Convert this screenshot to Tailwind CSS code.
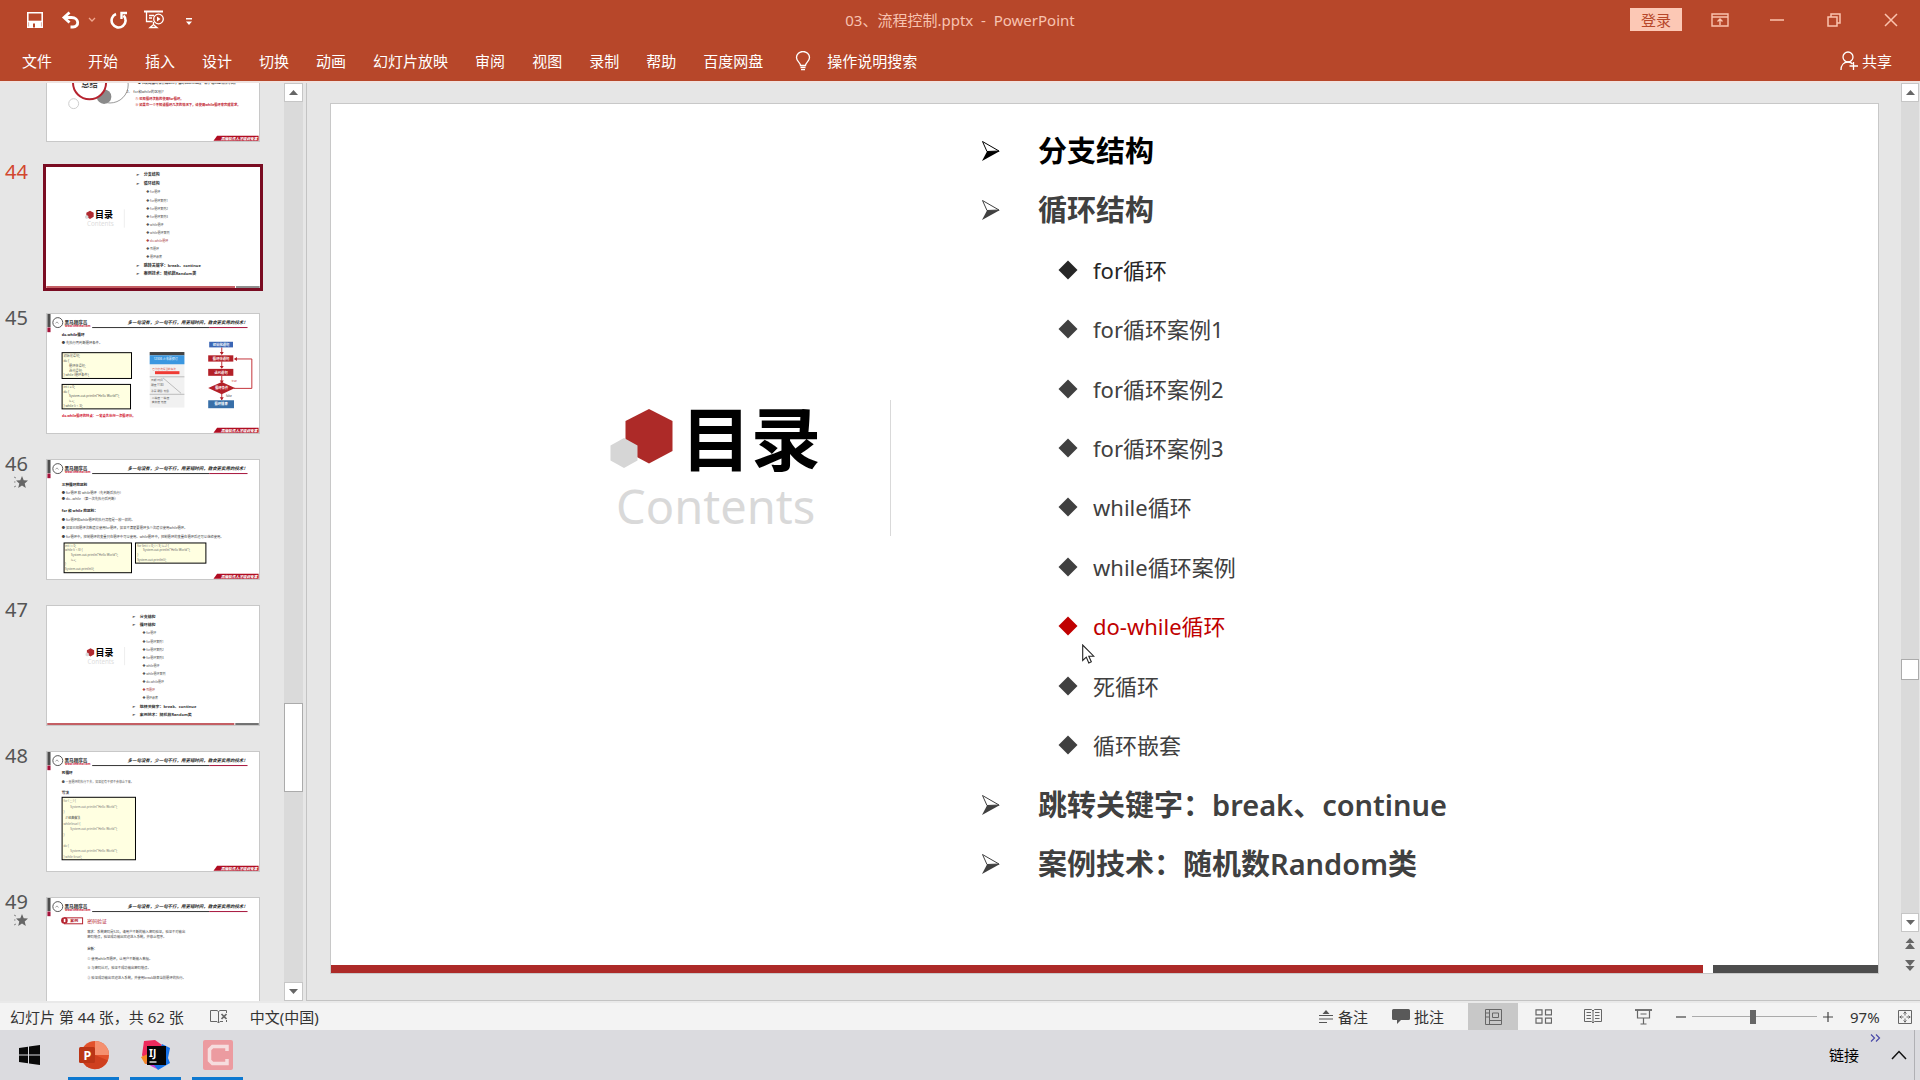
<!DOCTYPE html>
<html lang="zh-CN">
<head>
<meta charset="utf-8">
<title>03、流程控制.pptx - PowerPoint</title>
<script src="https://cdn.jsdelivr.net/npm/@tailwindcss/browser@4"></script>
</head>
<body class="flex h-screen flex-col overflow-hidden bg-[#e6e6e6] font-['Noto_Sans','Noto_Sans_CJK_SC',sans-serif] text-[15px] leading-5 text-[#333]">

<!-- Shared parts of the slide thumbnails -->
<svg width="0" height="0" class="absolute" aria-hidden="true">
  <defs>
    <symbol id="brand" viewBox="0 0 640 360">
      <rect width="10" height="40" fill="#4d4d4d"/><rect y="41" width="10" height="14" fill="#a5123a"/>
      <circle cx="32" cy="26" r="15" fill="none" stroke="#555" stroke-width="3"/><path d="M25 28l5-4 4 5" stroke="#777" stroke-width="2" fill="none"/>
      <text x="52" y="29" font-size="14" font-weight="900" fill="#444">黑马程序员</text>
      <text x="54" y="38" font-size="8.5" font-weight="700" fill="#d02238">www.itheima.com</text>
      <text x="243" y="30" font-size="13.5" font-weight="700" font-style="italic" fill="#222">多一句没有，少一句不行，用更短时间，教会更实用的技术！</text>
      <path d="M136 41H490" stroke="#333" stroke-width="3"/><path d="M490 41H606" stroke="#a5123a" stroke-width="3"/>
    </symbol>
    <symbol id="ribbon" viewBox="0 0 640 360">
      <path d="M514 344h126v15H503z" fill="#b00d22"/>
      <text x="526" y="356" font-size="11" font-weight="900" font-style="italic" fill="#fff">高级软件人才培训专家</text>
    </symbol>
    <symbol id="toc-title" viewBox="0 0 640 360">
      <path d="M131 128l11 6v12l-11 7-11-7v-12z" fill="#b02a30"/><path d="M121 141l5 3v6l-5 3-5-3v-6z" fill="#d9d9d9"/>
      <text x="146" y="150" font-size="27" font-weight="700" fill="#000">目录</text>
      <text x="122" y="174" font-size="19" fill="#ddd">Contents</text>
      <path d="M234 124v55" stroke="#ccc" stroke-width="1"/>
    </symbol>
    <symbol id="toc-list" viewBox="0 0 240 360">
      <g font-size="12" font-weight="700" fill="#333">
        <text x="14" y="25">➢</text><text x="38" y="25">分支结构</text>
        <text x="14" y="52">➢</text><text x="38" y="52">循环结构</text>
        <text x="14" y="298">➢</text><text x="38" y="298">跳转关键字：break、continue</text>
        <text x="14" y="322">➢</text><text x="38" y="322">案例技术：随机数Random类</text>
      </g>
      <g font-size="9" fill="#555">
        <text x="46" y="76">◆  for循环</text><text x="46" y="101">◆  for循环案例1</text><text x="46" y="125">◆  for循环案例2</text>
        <text x="46" y="149">◆  for循环案例3</text><text x="46" y="175">◆  while循环</text><text x="46" y="199">◆  while循环案例</text>
      </g>
    </symbol>
  </defs>
</svg>

<header class="flex h-[81px] shrink-0 flex-col bg-[#b7472a] text-white">
  <div class="grid h-[39px] grid-cols-[1fr_auto_1fr] items-center">
    <div class="flex items-center pl-[26px]">
      <button aria-label="保存"><svg width="18" height="18" viewBox="0 0 18 18" fill="none" stroke="#fff" stroke-width="1.6"><path d="M1.8 1.8h14.4v14.4H1.8zM4 16v-5h10v5"/><path d="M2 10.5h14"/><path d="M4 11h10v5H4z" fill="#fff"/><path d="M8 12.5v4" stroke="#b7472a" stroke-width="2"/></svg></button>
      <button aria-label="撤消" class="ml-[17px]"><svg width="19" height="18" viewBox="0 0 19 18" fill="none" stroke="#fff" stroke-width="2.8"><path d="M8.5 1.500L3 6.500l5.500 5M3 6.500h7.500c8 0 8 9.500 1.500 9.500H9.500"/></svg></button>
      <button aria-label="撤消列表" class="ml-2"><svg width="8" height="6" viewBox="0 0 8 6" fill="none" stroke="#f0a890" stroke-width="1.300"><path d="M1 1l3 3 3-3"/></svg></button>
      <button aria-label="重复" class="ml-[14px]"><svg width="18" height="18" viewBox="0 0 18 18" fill="none" stroke="#fff" stroke-width="2.600"><path d="M6 3A7 7 0 1 0 13.500 4.500"/><path d="M17 2h-5.500v6" stroke-width="2.400"/></svg></button>
      <button aria-label="从头开始放映" class="ml-4"><svg width="21" height="19" viewBox="0 0 21 19" fill="none" stroke="#fff" stroke-width="1.300"><path d="M0 1.500h19" stroke-width="2"/><path d="M2.500 2v9.500h6M5 5.500h5M5 8h3M9.500 12v3M6 17.500l3.500-3 3.500 3z"/><circle cx="14.500" cy="9" r="4.800"/><path d="M13 6.500v5l3.500-2.500z" fill="#fff" stroke="none"/></svg></button>
      <button aria-label="自定义快速访问工具栏" class="ml-5 pt-1"><svg width="8" height="8" viewBox="0 0 8 8"><path d="M1 0h6v1.500H1zM1 3.500h6L4 7z" fill="#fff"/></svg></button>
    </div>
    <h1 class="whitespace-pre text-[#f7c3b1]">03、流程控制.pptx  -  PowerPoint</h1>
    <div class="flex items-center justify-end pr-px">
      <button class="mr-[9px] h-[23px] w-[52px] bg-[#fcc8b5] text-[#b7472a]">登录</button>
      <button aria-label="功能区显示选项" class="flex w-[57px] justify-center"><svg width="18" height="14" viewBox="0 0 18 14" fill="none" stroke="#fbc3ae" stroke-width="1.400"><path d="M1 1h16v12H1zM1 4h16M9 12V6.500M6.500 8.500L9 6l2.500 2.500"/></svg></button>
      <button aria-label="最小化" class="flex w-[57px] justify-center"><svg width="14" height="14" viewBox="0 0 14 14"><path d="M0 7h14" stroke="#fbc3ae" stroke-width="1.500"/></svg></button>
      <button aria-label="还原" class="flex w-[57px] justify-center"><svg width="14" height="14" viewBox="0 0 14 14" fill="none" stroke="#fbc3ae" stroke-width="1.500"><path d="M1 4h9v9H1zM4 4V1h9v9h-3"/></svg></button>
      <button aria-label="关闭" class="flex w-[57px] justify-center"><svg width="14" height="14" viewBox="0 0 14 14"><path d="M1 1l12 12M13 1L1 13" stroke="#fbc3ae" stroke-width="1.500"/></svg></button>
    </div>
  </div>
  <nav class="flex flex-1 items-center gap-[27px] pt-px pr-7 pl-[22px]">
    <button class="mr-[9px]">文件</button><button>开始</button><button>插入</button><button>设计</button><button>切换</button><button>动画</button><button>幻灯片放映</button><button>审阅</button><button>视图</button><button>录制</button><button>帮助</button><button>百度网盘</button>
    <button class="ml-[5px] flex items-center gap-4"><svg width="16" height="20" viewBox="0 0 16 20" fill="none" stroke="#fff" stroke-width="1.300"><path d="M5.500 14.500c0-3-4-4-4-8a6.500 6 0 0 1 13 0c0 4-4 5-4 8zM5.500 16.500h5M6 18.700h4"/></svg>操作说明搜索</button>
    <button class="ml-auto flex items-center gap-1"><svg width="18" height="20" viewBox="0 0 18 20" fill="none" stroke="#fff" stroke-width="1.300"><circle cx="8" cy="6" r="5"/><path d="M1 19c0-5 3-8 7-8 2 0 3.500.7 4.500 2M13.500 11v8M9.500 15H18"/></svg>共享</button>
  </nav>
</header>

<main class="flex min-h-0 flex-1 overflow-hidden border-t-2 border-[#efe3e0]">
  <aside class="flex w-[307px] shrink-0 border-r border-[#c3c3c3]">
    <ol class="-mt-[62px] flex-1 overflow-hidden text-[20px] leading-[10px] text-[#555]">
      <li class="flex h-[146px]">
        <span class="w-[46px]"></span>
        <button aria-label="幻灯片 43" class="h-[121px] w-[214px] border border-[#c8c8c8] bg-white">
          <svg width="212" height="119" viewBox="0 0 640 360" class="block">
            <circle cx="190" cy="190" r="55" fill="none" stroke="#666" stroke-width="2"/><circle cx="172" cy="226" r="22" fill="#8a8a8a"/>
            <circle cx="128" cy="184" r="50" fill="#fff" stroke="#b5232f" stroke-width="6"/><circle cx="80" cy="247" r="15" fill="none" stroke="#ccc" stroke-width="3"/>
            <text x="103" y="196" font-size="25" font-weight="700" fill="#444">总结</text>
            <text x="274" y="187" font-size="10" font-weight="700" fill="#222">● 先判断循环条件再执行，循环的执行流程一样，格式上有所不同。</text>
            <text x="240" y="214" font-size="11" fill="#444">2、 for和while的区别？</text>
            <text x="266" y="236" font-size="10" font-weight="700" fill="#c0202c">① 已知循环次数的使用for循环。</text>
            <text x="266" y="254" font-size="10" font-weight="700" fill="#c0202c">② 如果在一个不知道循环几次的情况下，请使用while循环来完成需求。</text>
            <use href="#ribbon"/>
          </svg>
        </button>
      </li>
      <li class="flex h-[146px]">
        <span class="w-[46px] pl-[5px] text-[#d2472f]">44</span>
        <button aria-label="幻灯片 44" aria-current="true" class="h-[121px] w-[214px] bg-white outline-3 outline-[#7a0c22]">
          <svg width="214" height="120" viewBox="0 0 640 360" class="block">
            <use href="#toc-title"/><use href="#toc-list" x="254" width="240" height="360"/>
            <g font-size="9" fill="#555"><text x="300" y="223" fill="#a44">◆  do-while循环</text><text x="300" y="247">◆  死循环</text><text x="300" y="271">◆  循环嵌套</text></g>
            <path d="M0 357H566" stroke="#b02a30" stroke-width="4"/><path d="M569 357H640" stroke="#555" stroke-width="4"/>
          </svg>
        </button>
      </li>
      <li class="flex h-[146px]">
        <span class="w-[46px] pl-[5px]">45</span>
        <button aria-label="幻灯片 45" class="h-[121px] w-[214px] border border-[#c8c8c8] bg-white">
          <svg width="212" height="119" viewBox="0 0 640 360" class="block">
            <use href="#brand"/>
            <text x="44" y="68" font-size="11" font-weight="700" fill="#222">do-while循环</text>
            <text x="44" y="92" font-size="10" fill="#444">●  先执行再判断循环条件。</text>
            <rect x="45" y="117" width="210" height="78" fill="#ffffe1" stroke="#000" stroke-width="3"/>
            <g font-size="9.500" fill="#555"><text x="49" y="131">初始化语句;</text><text x="49" y="145">do {</text><text x="66" y="159">循环体语句;</text><text x="66" y="174">迭代语句;</text><text x="49" y="189">} while (循环条件);</text></g>
            <rect x="45" y="213" width="207" height="74" fill="#ffffe1" stroke="#000" stroke-width="3"/>
            <g font-size="9.500" fill="#555"><text x="49" y="225">int i = 0;</text><text x="49" y="238">do {</text><text x="66" y="252">System.out.println("Hello World!");</text><text x="66" y="267">i++;</text><text x="49" y="282">} while (i &lt; 3);</text></g>
            <text x="45" y="311" font-size="10" font-weight="700" fill="#d0112b">do-while循环的特点：一定会先执行一次循环体。</text>
            <rect x="310" y="115" width="105" height="168" fill="#f1f1f1"/><rect x="310" y="115" width="105" height="10" fill="#444"/><rect x="310" y="125" width="105" height="27" fill="#3b97e0"/>
            <text x="322" y="140" font-size="9" fill="#fff">12306 火车票预订</text><text x="318" y="168" font-size="8" fill="#d95b50">已为您选择当前车次</text><rect x="326" y="173" width="74" height="9" fill="#ef3b34"/>
            <g font-size="8.500" fill="#666"><text x="314" y="203">日期  时间</text><text x="314" y="218">硬座 ¥180</text><text x="314" y="236">余票  硬卧  软卧</text><text x="316" y="258">二等座     一等座</text><text x="316" y="270">商务座     无座</text></g>
            <path d="M310 190h105M310 243h105M350 193l55 47" stroke="#bbb" stroke-width="3"/>
            <g stroke="#c3343a" stroke-width="3" fill="none"><path d="M528 101v20M528 143v20M528 187v20M528 242v18M564 225h55V136H567"/></g>
            <path d="M522 115h12l-6 9zM522 157h12l-6 9zM522 201h12l-6 9zM522 252h12l-6 9zM574 130v12l-9-6z" fill="#b32028"/>
            <rect x="490" y="84" width="72" height="17" fill="#3b66b5"/><rect x="487" y="125" width="76" height="19" fill="#b32028"/><rect x="487" y="166" width="76" height="21" fill="#b32028"/><path d="M528 206l40 18-40 19-41-19z" fill="#b32028"/><rect x="487" y="261" width="78" height="24" fill="#386fa8"/>
            <g font-size="10" font-weight="700" fill="#fff" text-anchor="middle"><text x="526" y="96">初始化语句</text><text x="526" y="138">循环体语句</text><text x="526" y="180">迭代语句</text><text x="528" y="228">循环条件</text><text x="526" y="276">循环结束</text></g>
            <text x="558" y="207" font-size="8" fill="#c33">true</text><text x="541" y="252" font-size="8" fill="#333">false</text>
            <use href="#ribbon"/>
          </svg>
        </button>
      </li>
      <li class="flex h-[146px]">
        <div class="flex w-[46px] flex-col gap-[7px] pl-[5px]"><span>46</span><svg width="14" height="13" viewBox="0 0 14 13" class="ml-[9px]"><path d="M8 0l1.700 4.300 4.300.3-3.300 2.800 1.100 4.600L8 9.500 4.200 12l1.100-4.600L2 4.600l4.300-.3z" fill="#666"/><path d="M0 1l2 1M0 6h1.500M0 11l2-1" stroke="#888"/></svg></div>
        <button aria-label="幻灯片 46" class="h-[121px] w-[214px] border border-[#c8c8c8] bg-white">
          <svg width="212" height="119" viewBox="0 0 640 360" class="block">
            <use href="#brand"/>
            <g font-size="11" font-weight="700" fill="#222"><text x="44" y="79">三种循环的区别</text><text x="44" y="157">for 和 while 的区别：</text></g>
            <g font-size="10" fill="#444"><text x="44" y="103">●  for循环 和 while循环（先判断后执行）</text><text x="44" y="122">●  do...while （第一次先执行后判断）</text><text x="44" y="185">●  for循环和while循环的执行流程是一模一样的。</text><text x="44" y="209">●  如果已知循环次数建议使用for循环，如果不清楚要循环多少次建议使用while循环。</text></g>
            <text x="44" y="236" font-size="10" fill="#444">●  for循环中，控制循环的变量只在循环中可以使用。while循环中，控制循环的变量在循环后还可以继续使用。</text>
            <rect x="51" y="251" width="204" height="90" fill="#ffffe1" stroke="#000" stroke-width="3"/>
            <rect x="267" y="251" width="213" height="61" fill="#ffffe1" stroke="#000" stroke-width="3"/>
            <g font-size="9" fill="#666"><text x="54" y="263">int i = 0;</text><text x="54" y="276">while (i &lt; 3) {</text><text x="72" y="290">System.out.println("Hello World");</text><text x="72" y="305">i++;</text><text x="54" y="319">}</text><text x="54" y="334">System.out.println(i);</text><text x="272" y="263">for (int i = 0; i &lt; 3; i++) {</text><text x="290" y="276">System.out.println("Hello World");</text><text x="272" y="290">}</text><text x="272" y="305">System.out.println(i);</text></g>
            <use href="#ribbon"/>
          </svg>
        </button>
      </li>
      <li class="flex h-[146px]">
        <span class="w-[46px] pl-[5px]">47</span>
        <button aria-label="幻灯片 47" class="h-[121px] w-[214px] border border-[#c8c8c8] bg-white">
          <svg width="212" height="119" viewBox="0 0 640 360" class="block">
            <use href="#toc-title"/><use href="#toc-list" x="242" y="10" width="240" height="360"/>
            <g font-size="9" fill="#555"><text x="288" y="233">◆  do-while循环</text><text x="288" y="257" fill="#a44">◆  死循环</text><text x="288" y="281">◆  循环嵌套</text></g>
            <path d="M0 357H566" stroke="#b02a30" stroke-width="5"/><path d="M569 357H640" stroke="#555" stroke-width="5"/>
          </svg>
        </button>
      </li>
      <li class="flex h-[146px]">
        <span class="w-[46px] pl-[5px]">48</span>
        <button aria-label="幻灯片 48" class="h-[121px] w-[214px] border border-[#c8c8c8] bg-white">
          <svg width="212" height="119" viewBox="0 0 640 360" class="block">
            <use href="#brand"/>
            <g font-size="11" font-weight="700" fill="#222"><text x="44" y="67">死循环</text><text x="44" y="127">写法</text></g>
            <text x="44" y="95" font-size="9" fill="#555">●   一直循环的执行下去，如果没有干预不会停止下来。</text>
            <rect x="45" y="137" width="222" height="189" fill="#ffffe1" stroke="#000" stroke-width="3"/>
            <g font-size="9" fill="#777"><text x="49" y="151">for ( ; ; ) {</text><text x="70" y="169">System.out.println("Hello World");</text><text x="49" y="184">}</text><text x="55" y="202" fill="#333">// 经典做法</text><text x="49" y="220">while(true) {</text><text x="70" y="235">System.out.println("Hello World");</text><text x="49" y="255">}</text><text x="49" y="286">do {</text><text x="70" y="304">System.out.println("Hello World");</text><text x="49" y="320">} while (true);</text></g>
            <use href="#ribbon"/>
          </svg>
        </button>
      </li>
      <li class="flex h-[146px]">
        <div class="flex w-[46px] flex-col gap-[7px] pl-[5px]"><span>49</span><svg width="14" height="13" viewBox="0 0 14 13" class="ml-[9px]"><path d="M8 0l1.700 4.300 4.300.3-3.300 2.800 1.100 4.600L8 9.500 4.200 12l1.100-4.600L2 4.600l4.300-.3z" fill="#666"/><path d="M0 1l2 1M0 6h1.500M0 11l2-1" stroke="#888"/></svg></div>
        <button aria-label="幻灯片 49" class="h-[121px] w-[214px] border border-[#c8c8c8] bg-white">
          <svg width="212" height="119" viewBox="0 0 640 360" class="block">
            <use href="#brand"/>
            <rect x="52" y="60" width="55" height="18" fill="#fff" stroke="#b5232f" stroke-width="3"/><circle cx="52" cy="68" r="10" fill="#b5232f"/><path d="M50 63h5v10h-5z" fill="#fff"/>
            <text x="70" y="73" font-size="12" font-weight="700" fill="#b5232f">案例</text><text x="121" y="75" font-size="15" fill="#b5232f">密码验证</text>
            <g font-size="10" fill="#444"><text x="121" y="105">需求：系统密码是520，请用户不断的输入密码验证，验证不对输出</text><text x="121" y="122">密码错误，验证成功输出欢迎进入系统，并停止程序。</text><text x="121" y="158" font-weight="700">分析：</text><text x="121" y="189">①  使用while死循环，让用户不断输入数据。</text><text x="121" y="216">②  与密码比对，验证不成功输出密码错误。</text><text x="121" y="246">③  验证成功输出欢迎进入系统，并使用break结束当前循环的执行。</text></g>
            <use href="#ribbon"/>
          </svg>
        </button>
      </li>
    </ol>
    <div class="mr-[3px] flex w-[19px] flex-col bg-[#dadada]">
      <button aria-label="向上滚动" class="flex h-[19px] items-center justify-center border border-[#c6c6c6] bg-white"><svg width="9" height="5" viewBox="0 0 9 5"><path d="M0 5h9L4.500 0z" fill="#666"/></svg></button>
      <div class="flex-[603]"></div>
      <div class="h-[89px] border border-[#ababab] bg-white"></div>
      <div class="flex-[190]"></div>
      <button aria-label="向下滚动" class="flex h-[19px] items-center justify-center border border-[#c6c6c6] bg-white"><svg width="9" height="5" viewBox="0 0 9 5"><path d="M0 0h9L4.500 5z" fill="#666"/></svg></button>
    </div>
  </aside>

  <div class="flex min-w-0 flex-1 border-b border-[#c3c3c3]">
    <section class="mt-5 mr-[22px] mb-[26px] ml-[23px] flex flex-1 flex-col border border-[#c8c8c8] bg-white">
      <div class="flex flex-1">
        <div class="flex w-[560px] shrink-0 flex-col pt-[296px]">
          <div class="flex h-[136px] justify-end border-r border-[#d9d9d9] pr-[68px]">
            <div class="flex w-[212px] flex-col pt-px">
              <div class="flex h-[76px] items-center">
                <svg width="64" height="60" viewBox="0 0 64 60" class="shrink-0"><path d="M39 0l23.500 12v30L39 54.500 15.500 42V12z" fill="#ad2a28"/><path d="M14 29l13.500 7.500v15L14 59 .5 51.500v-15z" fill="#d6d6d6"/></svg>
                <h2 class="ml-[7px] text-[70px] leading-[76px] font-bold whitespace-nowrap text-black">目录</h2>
              </div>
              <p class="pt-px pl-[6px] text-[47px] leading-[56px] text-[#d9d9d9]">Contents</p>
            </div>
          </div>
        </div>
        <ul class="grid flex-1 auto-rows-fr items-center pt-[17px] pb-[71px] pl-[90px] text-[22px] text-[#404040] [&_svg]:shrink-0">
          <li class="flex items-center gap-[37px] text-[29px] font-semibold text-black"><svg width="20" height="22" viewBox="0 0 20 22"><path d="M1.500 1.500L18 11 6 11.500z" fill="#fff" stroke="currentColor"/><path d="M6 11.500L19 11 1 21z" fill="currentColor"/></svg>分支结构</li>
          <li class="flex items-center gap-[37px] text-[29px] font-semibold"><svg width="20" height="22" viewBox="0 0 20 22"><path d="M1.500 1.500L18 11 6 11.500z" fill="#fff" stroke="currentColor"/><path d="M6 11.500L19 11 1 21z" fill="currentColor"/></svg>循环结构</li>
          <li class="flex items-center gap-[15px] pl-[77px] text-[#262626]"><svg width="20" height="20" viewBox="0 0 20 20"><path d="M10 .5l9.500 9.500-9.500 9.500L.5 10z" fill="currentColor"/></svg>for循环</li>
          <li class="flex items-center gap-[15px] pl-[77px]"><svg width="20" height="20" viewBox="0 0 20 20"><path d="M10 .5l9.500 9.500-9.500 9.500L.5 10z" fill="currentColor"/></svg>for循环案例1</li>
          <li class="flex items-center gap-[15px] pl-[77px]"><svg width="20" height="20" viewBox="0 0 20 20"><path d="M10 .5l9.500 9.500-9.500 9.500L.5 10z" fill="currentColor"/></svg>for循环案例2</li>
          <li class="flex items-center gap-[15px] pl-[77px]"><svg width="20" height="20" viewBox="0 0 20 20"><path d="M10 .5l9.500 9.500-9.500 9.500L.5 10z" fill="currentColor"/></svg>for循环案例3</li>
          <li class="flex items-center gap-[15px] pl-[77px]"><svg width="20" height="20" viewBox="0 0 20 20"><path d="M10 .5l9.500 9.500-9.500 9.500L.5 10z" fill="currentColor"/></svg>while循环</li>
          <li class="flex items-center gap-[15px] pl-[77px]"><svg width="20" height="20" viewBox="0 0 20 20"><path d="M10 .5l9.500 9.500-9.500 9.500L.5 10z" fill="currentColor"/></svg>while循环案例</li>
          <li class="relative flex items-center gap-[15px] pl-[77px] text-[#c00000]"><svg width="20" height="20" viewBox="0 0 20 20"><path d="M10 .5l9.500 9.500-9.500 9.500L.5 10z" fill="currentColor"/></svg>do-while循环
            <svg width="13" height="20" viewBox="0 0 13 20" class="absolute top-7 left-[101px]" aria-hidden="true"><path d="M.7 1v15.500l3.600-3.400 2.500 5.800 2.500-1.100-2.500-5.600h5z" fill="#fff" stroke="#222" stroke-width="1.100"/></svg>
          </li>
          <li class="flex items-center gap-[15px] pl-[77px]"><svg width="20" height="20" viewBox="0 0 20 20"><path d="M10 .5l9.500 9.500-9.500 9.500L.5 10z" fill="currentColor"/></svg>死循环</li>
          <li class="flex items-center gap-[15px] pl-[77px]"><svg width="20" height="20" viewBox="0 0 20 20"><path d="M10 .5l9.500 9.500-9.500 9.500L.5 10z" fill="currentColor"/></svg>循环嵌套</li>
          <li class="flex items-center gap-[37px] text-[29px] font-semibold"><svg width="20" height="22" viewBox="0 0 20 22"><path d="M1.500 1.500L18 11 6 11.500z" fill="#fff" stroke="currentColor"/><path d="M6 11.500L19 11 1 21z" fill="currentColor"/></svg>跳转关键字：break、continue</li>
          <li class="flex items-center gap-[37px] text-[29px] font-semibold"><svg width="20" height="22" viewBox="0 0 20 22"><path d="M1.500 1.500L18 11 6 11.500z" fill="#fff" stroke="currentColor"/><path d="M6 11.500L19 11 1 21z" fill="currentColor"/></svg>案例技术：随机数Random类</li>
        </ul>
      </div>
      <div class="flex h-2 gap-[10px]"><div class="flex-1 bg-[#ad2a28]"></div><div class="w-[165px] bg-[#4d4d4d]"></div></div>
    </section>
    <div class="mr-px flex w-[18px] flex-col items-stretch pb-[29px]">
      <button aria-label="上一屏" class="flex h-[19px] shrink-0 items-center justify-center border border-[#c6c6c6] bg-white"><svg width="9" height="5" viewBox="0 0 9 5"><path d="M0 5h9L4.500 0z" fill="#666"/></svg></button>
      <div class="flex-[557] bg-[#dadada]"></div>
      <div class="h-[21px] border border-[#ababab] bg-white"></div>
      <div class="flex-[233] bg-[#dadada]"></div>
      <button aria-label="下一屏" class="flex h-[19px] shrink-0 items-center justify-center border border-[#c6c6c6] bg-white"><svg width="9" height="5" viewBox="0 0 9 5"><path d="M0 0h9L4.500 5z" fill="#666"/></svg></button>
      <button aria-label="上一张幻灯片" class="mt-[6px] flex justify-center"><svg width="10" height="11" viewBox="0 0 10 11" fill="#666"><path d="M5 0l4.500 5h-9zM5 5l5 6H0z"/></svg></button>
      <button aria-label="下一张幻灯片" class="mt-[11px] flex justify-center"><svg width="10" height="11" viewBox="0 0 10 11" fill="#666"><path d="M0 0h10L5 6zM.5 6h9L5 11z"/></svg></button>
    </div>
  </div>
</main>

<footer class="flex h-[29px] shrink-0 items-center border-t-2 border-[#e9e9e9] bg-[#f3f3f3]">
  <span class="pl-[10px] whitespace-nowrap">幻灯片 第 44 张，共 62 张</span>
  <button aria-label="拼写检查" class="ml-[26px]"><svg width="18" height="15" viewBox="0 0 18 15" fill="none" stroke="#666"><path d="M8.500 14V2.500L7 1.500H.5v11H7l1.500 1.500 1.500-1.500h3M8.500 2.500L10 1.500h6.500V4M16.500 11v2"/><path d="M11.500 5l5 5M16.500 5l-5 5" stroke-width="1.700"/></svg></button>
  <button class="ml-[22px]">中文(中国)</button>
  <div class="ml-auto flex h-full items-center">
    <button class="flex items-center gap-[5px]"><svg width="14" height="13" viewBox="0 0 14 13"><path d="M3.500 4L7 0l3.500 4z" fill="#555"/><path d="M0 5.500h14M0 9h14M0 12.500h8" stroke="#555" stroke-width="1.200"/></svg>备注</button>
    <button class="ml-6 flex items-center gap-1"><svg width="18" height="15" viewBox="0 0 18 15"><path d="M1.500 0h15Q18 0 18 1.500v8q0 1.500-1.500 1.500H9l-4 4v-4H1.500Q0 11 0 9.500v-8Q0 0 1.500 0z" fill="#595959"/></svg>批注</button>
    <button aria-label="普通视图" aria-pressed="true" class="ml-6 flex h-full w-[50px] items-center justify-center bg-[#c8c8c8]"><svg width="17" height="16" viewBox="0 0 17 16" fill="none" stroke="#666"><path d="M.5.5h16v15H.5zM4.500.5v15M4.500 11.500h12M7.500 4h6v4.500h-6zM1 4h3M1 8h3"/></svg></button>
    <button aria-label="幻灯片浏览" class="flex w-[50px] justify-center"><svg width="17" height="15" viewBox="0 0 17 15" fill="none" stroke="#666" stroke-width="1.200"><path d="M1 .8h6v5H1zM10.500.8h6v5h-6zM1 9.200h6v5H1zM10.500 9.200h6v5h-6z"/></svg></button>
    <button aria-label="阅读视图" class="flex w-[50px] justify-center"><svg width="18" height="15" viewBox="0 0 18 15" fill="none" stroke="#666"><path d="M9 14V2L7.500.5H.5v12h7L9 14l1.500-1.500h7V.5h-7L9 2M2.500 3.500h4.500M2.500 6.500h4.500M2.500 9.500h4.500M11 3.500h4.500M11 6.500h4.500M11 9.500h4.500"/></svg></button>
    <button aria-label="幻灯片放映" class="flex w-[50px] justify-center"><svg width="17" height="16" viewBox="0 0 17 16" fill="none" stroke="#666" stroke-width="1.200"><path d="M0 1h17" stroke-width="1.800"/><path d="M2.500 1.500v7.500h12V1.500M5.500 5h6M8.500 9v6M5.500 15h6"/></svg></button>
    <button aria-label="缩小" class="ml-2"><svg width="10" height="10" viewBox="0 0 10 10"><path d="M0 5h10" stroke="#444" stroke-width="1.200"/></svg></button>
    <input type="range" aria-label="缩放" min="10" max="200" value="103" class="mx-[6px] h-[14px] w-[125px] appearance-none bg-[linear-gradient(#aaa,#aaa)] bg-[length:100%_1px] bg-center bg-no-repeat [&::-webkit-slider-thumb]:h-[14px] [&::-webkit-slider-thumb]:w-[6px] [&::-webkit-slider-thumb]:appearance-none [&::-webkit-slider-thumb]:bg-[#666]">
    <button aria-label="放大"><svg width="10" height="10" viewBox="0 0 10 10"><path d="M0 5h10M5 0v10" stroke="#444" stroke-width="1.200"/></svg></button>
    <button class="ml-[17px] w-8 text-left">97%</button>
    <button aria-label="使幻灯片适应当前窗口" class="mr-2 ml-4"><svg width="14" height="14" viewBox="0 0 14 14" fill="none" stroke="#666"><path d="M.5.500h13v13H.5z"/><path d="M7 1.500v4M5.500 3.500L7 2l1.500 1.500M7 12.500v-4M5.500 10.500L7 12l1.500-1.500M1.500 7h4M3.500 5.500L2 7l1.500 1.500M12.500 7h-4M10.500 5.500L12 7l-1.500 1.500"/></svg></button>
  </div>
</footer>

<div class="flex h-[50px] shrink-0 bg-[#dbdbdf]">
  <button aria-label="开始" class="ml-[19px] flex w-[49px] items-center"><svg width="21" height="20" viewBox="0 0 21 20" fill="#0a0a0a"><path d="M0 3l9-1.300V9.500H0zM10 1.500L21 0v9.500H10zM0 10.500h9v7.800L0 17zM10 10.500h11V20l-11-1.500z"/></svg></button>
  <button aria-label="PowerPoint" class="flex w-[51px] flex-col items-center justify-between pt-[10px]">
    <svg width="30" height="30" viewBox="0 0 30 30"><circle cx="16" cy="15" r="14" fill="#e2512b"/><path d="M16 1a14 14 0 0 1 14 14H16z" fill="#f5906f"/><path d="M2.500 19A14 14 0 0 0 29 20.500L16 15z" fill="#cf3f1e"/><rect x="0" y="7" width="16" height="16" rx="1.500" fill="#bb3516"/><text x="4.500" y="19.500" font-size="12.500" font-weight="700" fill="#fff">P</text></svg>
    <span class="h-[3px] w-full bg-[#0d78d0]"></span>
  </button>
  <button aria-label="IntelliJ IDEA" class="ml-[11px] flex w-[51px] flex-col items-center justify-between pt-[10px]">
    <svg width="30" height="30" viewBox="0 0 30 30"><path d="M3 1l11-1 7 5-8 16-8 3-4-9z" fill="#ec2a5c"/><path d="M0 17l7-3 3 9-6 1z" fill="#f58a26"/><path d="M5 22l9-1 2 8-6-3z" fill="#c33bd0"/><path d="M21 4l8 4-2 10 2 5-12 7-4-5z" fill="#1672e8"/><rect x="6" y="6" width="19" height="19" fill="#050505"/><text x="8" y="17" font-size="10" font-weight="700" fill="#fff">IJ</text><path d="M8.500 22h7" stroke="#fff" stroke-width="1.300"/></svg>
    <span class="h-[3px] w-full bg-[#0d78d0]"></span>
  </button>
  <button aria-label="Camtasia" class="ml-[11px] flex w-[51px] flex-col items-center justify-between pt-[10px]">
    <svg width="30" height="30" viewBox="0 0 30 30"><rect width="30" height="30" rx="2" fill="#ec9ba0"/><path d="M24 11V6.500H9.500l-3 3v11l3 3H24V19" fill="none" stroke="#f6ddde" stroke-width="3.500"/></svg>
    <span class="h-[3px] w-full bg-[#0d78d0]"></span>
  </button>
  <div class="ml-auto flex text-black">
    <button class="self-center">链接</button>
    <button aria-label="更多链接" class="ml-[11px] self-start pt-1"><svg width="11" height="8" viewBox="0 0 11 8" fill="none" stroke="#4a4aa8" stroke-width="1.200"><path d="M1 .5L4.500 4 1 7.500M6 .5L9.500 4 6 7.500"/></svg></button>
    <button aria-label="显示隐藏的图标" class="mr-[7px] ml-[10px] self-center"><svg width="16" height="10" viewBox="0 0 16 10" fill="none" stroke="#111" stroke-width="1.500"><path d="M1 9l7-7.500L15 9"/></svg></button>
    <div class="mr-[5px] w-px bg-[#b0b0b4]"></div>
  </div>
</div>
</body>
</html>
